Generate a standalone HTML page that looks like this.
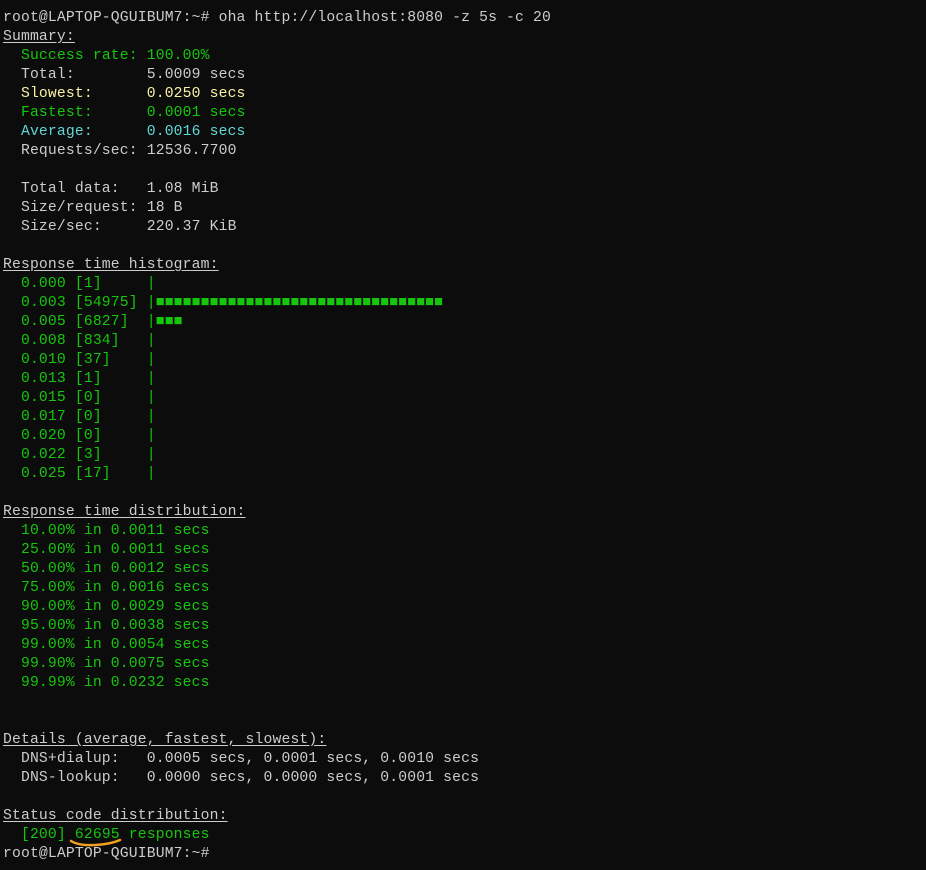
<!DOCTYPE html>
<html><head><meta charset="utf-8">
<style>
html,body{margin:0;padding:0;background:#0c0c0c;width:926px;height:870px;overflow:hidden}
pre{margin:0;padding:9px 0 0 3px;font-family:"Liberation Mono",monospace;font-size:14.73px;letter-spacing:0.15px;line-height:19px;color:#cccccc;white-space:pre;position:relative}
.g{color:#16c60c}.y{color:#f9f1a5}.c{color:#61d6d6}.u{text-decoration:underline;text-underline-offset:2px}
svg{position:absolute;left:0;top:0}
</style></head><body>
<pre>root@LAPTOP-QGUIBUM7:~# oha http://localhost:8080 -z 5s -c 20
<span class="u">Summary:</span>
  <span class="g">Success rate: 100.00%</span>
  Total:        5.0009 secs
  <span class="y">Slowest:      0.0250 secs</span>
  <span class="g">Fastest:      0.0001 secs</span>
  <span class="c">Average:      0.0016 secs</span>
  Requests/sec: 12536.7700

  Total data:   1.08 MiB
  Size/request: 18 B
  Size/sec:     220.37 KiB

<span class="u">Response time histogram:</span>
<span class="g">  0.000 [1]     |
  0.003 [54975] |■■■■■■■■■■■■■■■■■■■■■■■■■■■■■■■■
  0.005 [6827]  |■■■
  0.008 [834]   |
  0.010 [37]    |
  0.013 [1]     |
  0.015 [0]     |
  0.017 [0]     |
  0.020 [0]     |
  0.022 [3]     |
  0.025 [17]    |</span>

<span class="u">Response time distribution:</span>
<span class="g">  10.00% in 0.0011 secs
  25.00% in 0.0011 secs
  50.00% in 0.0012 secs
  75.00% in 0.0016 secs
  90.00% in 0.0029 secs
  95.00% in 0.0038 secs
  99.00% in 0.0054 secs
  99.90% in 0.0075 secs
  99.99% in 0.0232 secs</span>


<span class="u">Details (average, fastest, slowest):</span>
  DNS+dialup:   0.0005 secs, 0.0001 secs, 0.0010 secs
  DNS-lookup:   0.0000 secs, 0.0000 secs, 0.0001 secs

<span class="u">Status code distribution:</span>
  <span class="g">[200] 62695 responses</span>
root@LAPTOP-QGUIBUM7:~#<svg width="926" height="870"><path d="M71 841 Q79 846 96 845 Q111 844 120 840" stroke="#f0a020" stroke-width="2.5" fill="none" stroke-linecap="round"/></svg></pre>
</body></html>
